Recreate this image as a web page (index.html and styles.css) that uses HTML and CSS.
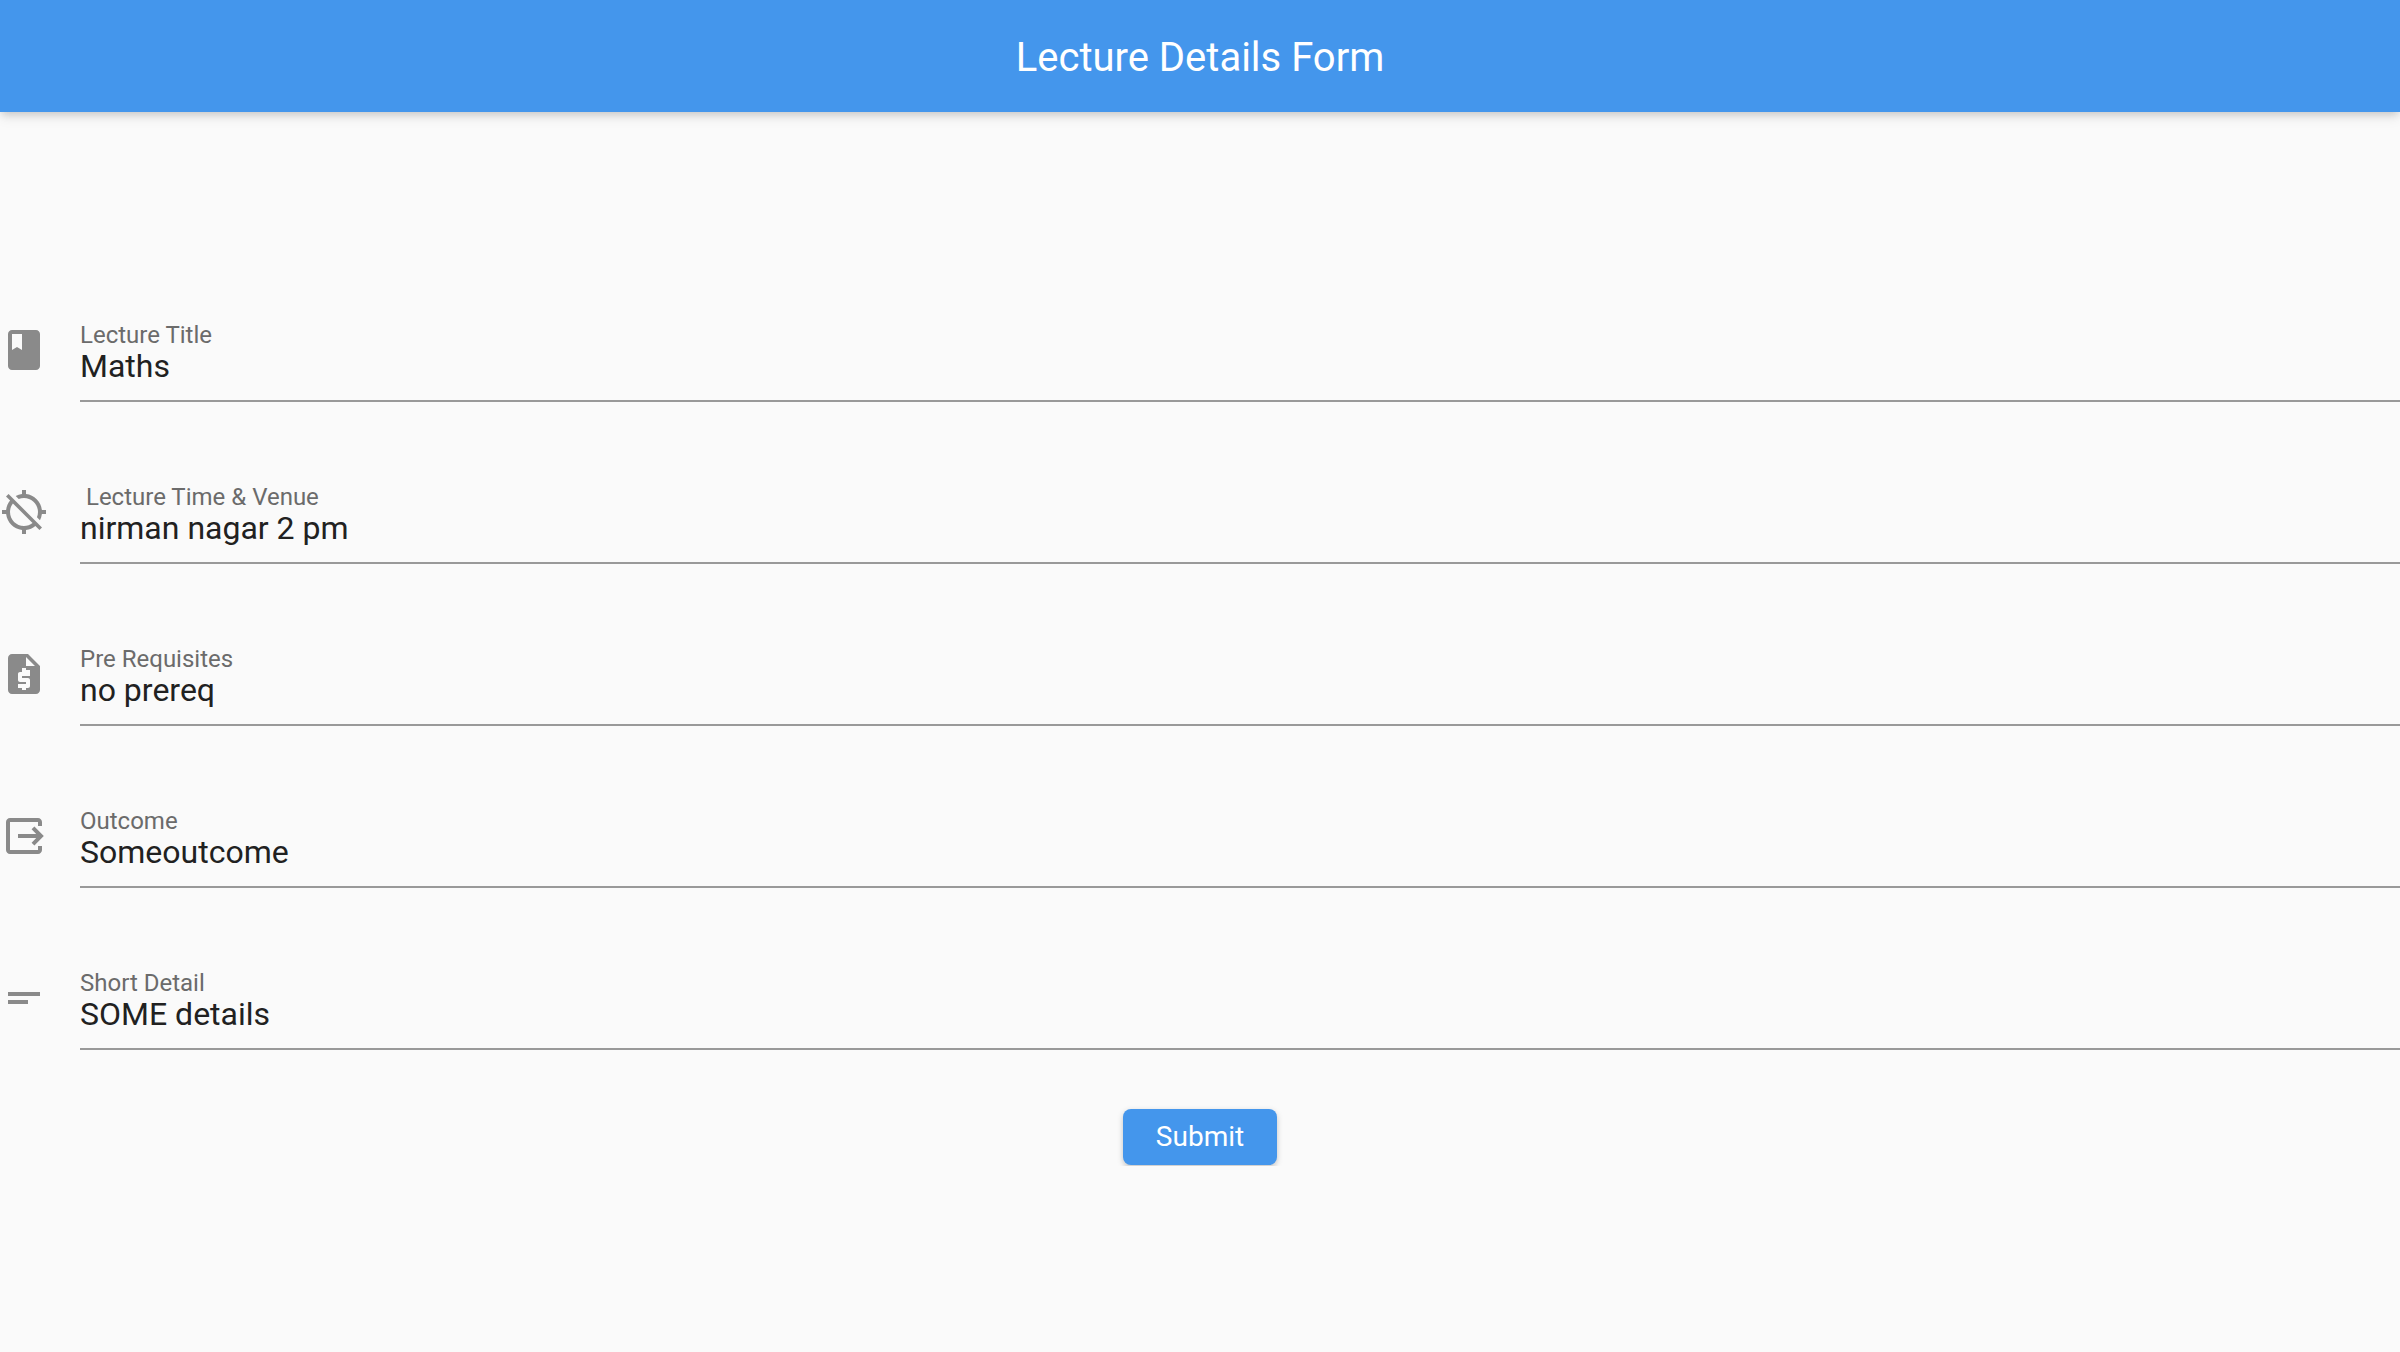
FILE: index.html
```html
<!DOCTYPE html>
<html lang="en">
<head>
  <meta charset="utf-8">
  <meta name="viewport" content="width=device-width, initial-scale=1">
  <title>Lecture Details Form</title>
  <link rel="stylesheet" href="styles.css">
</head>
<body>
  <header class="app-bar">
    <h1 class="app-bar-title">Lecture Details Form</h1>
  </header>
  <main>
    <form class="form">
      <div class="row">
        <svg class="icon" viewBox="0 0 24 24" aria-hidden="true"><path d="M18 2H6c-1.100 0-2 .9-2 2v16c0 1.100.9 2 2 2h12c1.100 0 2-.9 2-2V4c0-1.100-.9-2-2-2zM6 4h5v8l-2.500-1.500L6 12V4z"/></svg>
        <div class="field">
          <label class="label" for="title">Lecture Title</label>
          <input class="input" id="title" type="text" value="Maths">
        </div>
      </div>
      <div class="row">
        <svg class="icon" viewBox="0 0 24 24" aria-hidden="true"><path d="M20.940 11c-.46-4.170-3.770-7.480-7.940-7.940V1h-2v2.060c-1.130.12-2.190.46-3.160.97l1.500 1.500C10.160 5.190 11.060 5 12 5c3.870 0 7 3.130 7 7 0 .94-.19 1.840-.52 2.650l1.500 1.500c.5-.96.84-2.020.97-3.150H23v-2h-2.060zM3 4.270l2.040 2.040C3.970 7.620 3.250 9.230 3.060 11H1v2h2.060c.46 4.170 3.770 7.480 7.940 7.940V23h2v-2.060c1.770-.2 3.380-.91 4.690-1.980L19.730 21 21 19.730 4.270 3 3 4.270zm13.270 13.270C15.090 18.450 13.610 19 12 19c-3.870 0-7-3.130-7-7 0-1.610.55-3.090 1.460-4.270l9.810 9.810z"/></svg>
        <div class="field">
          <label class="label" for="venue">&nbsp;Lecture Time &amp; Venue</label>
          <input class="input" id="venue" type="text" value="nirman nagar 2 pm">
        </div>
      </div>
      <div class="row">
        <svg class="icon" viewBox="0 0 24 24" aria-hidden="true"><path d="M14 2H6c-1.100 0-1.990.9-1.990 2L4 20c0 1.100.89 2 1.990 2H18c1.100 0 2-.9 2-2V8l-6-6zm1 11h-4v1h3c.55 0 1 .45 1 1v3c0 .55-.45 1-1 1h-1v1h-2v-1H9v-2h4v-1h-3c-.55 0-1-.45-1-1v-3c0-.55.45-1 1-1h1V9h2v1h2v3zm-2-5V3.500L17.500 8H13z"/></svg>
        <div class="field">
          <label class="label" for="prereq">Pre Requisites</label>
          <input class="input" id="prereq" type="text" value="no prereq">
        </div>
      </div>
      <div class="row">
        <svg class="icon" viewBox="0 0 24 24" aria-hidden="true"><path d="M21 5v2h-2V5H5v14h14v-2h2v2c0 1.100-.9 2-2 2H5c-1.100 0-2-.9-2-2V5c0-1.100.9-2 2-2h14c1.100 0 2 .9 2 2zM17.200 16.800 21.900 12 17.200 7.200 15.800 8.600 18.100 11H9v2h9.100l-2.300 2.400z"/></svg>
        <div class="field">
          <label class="label" for="outcome">Outcome</label>
          <input class="input" id="outcome" type="text" value="Someoutcome">
        </div>
      </div>
      <div class="row">
        <svg class="icon" viewBox="0 0 24 24" aria-hidden="true"><path d="M4 9h16v2H4zM4 13h10v2H4z"/></svg>
        <div class="field">
          <label class="label" for="detail">Short Detail</label>
          <input class="input" id="detail" type="text" value="SOME details">
        </div>
      </div>
      <div class="actions">
        <button class="submit" type="button">Submit</button>
      </div>
    </form>
  </main>
</body>
</html>
```
FILE: styles.css
```css
* {
  box-sizing: border-box;
}

body {
  margin: 0;
  background: #fafafa;
  color: #212121;
  font-family: Roboto, "Liberation Sans", sans-serif;
}

.app-bar {
  padding: 34px 32px 30px;
  background: #4496ec;
  color: #fff;
  box-shadow: 0 4px 8px -2px rgba(0, 0, 0, 0.16), 0 6px 12px rgba(0, 0, 0, 0.07);
  text-align: center;
}

.app-bar-title {
  margin: 0;
  font-size: 40px;
  font-weight: 400;
  line-height: 48px;
}

.form {
  display: flex;
  flex-direction: column;
  gap: 58px;
  padding-top: 186px;
}

.row {
  display: flex;
  align-items: center;
  gap: 32px;
}

.icon {
  flex: none;
  width: 48px;
  height: 48px;
  fill: #8a8a8a;
}

.field {
  display: flex;
  flex: 1;
  flex-direction: column;
  padding: 24px 0 16px;
  border-bottom: 2px solid #999;
}

.label {
  color: #6b6b6b;
  font-size: 24px;
  line-height: 26px;
}

.input {
  width: 100%;
  height: 36px;
  padding: 0;
  border: 0;
  outline: 0;
  background: transparent;
  color: inherit;
  font: inherit;
  font-size: 32px;
  line-height: 36px;
}

.actions {
  display: flex;
  justify-content: center;
  padding: 1px 0;
}

.submit {
  min-width: 154px;
  height: 56px;
  padding: 0 32px;
  border: 0;
  border-radius: 8px;
  background: #4496ec;
  color: #fff;
  box-shadow: 0 2px 6px rgba(0, 0, 0, 0.18), 0 4px 4px rgba(0, 0, 0, 0.05);
  font: inherit;
  font-size: 28px;
  line-height: 32px;
}
```
